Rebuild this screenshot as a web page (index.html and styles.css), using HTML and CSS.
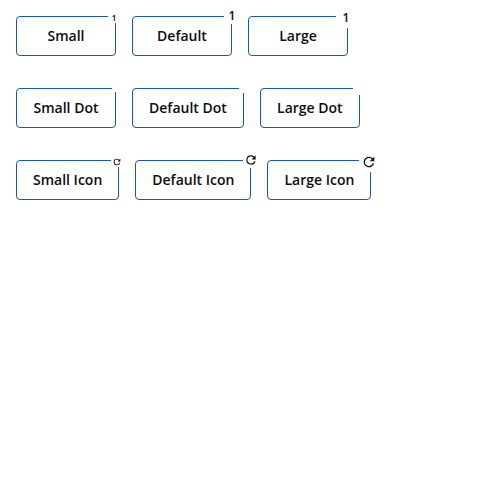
FILE: index.html
```html
<!DOCTYPE html>
<html lang="en">
<head>
<meta charset="utf-8">
<title>Badge sizes</title>
<link rel="stylesheet" href="styles.css">
</head>
<body>
<svg width="0" height="0" class="defs" aria-hidden="true"><symbol id="refresh" viewBox="0 0 24 24"><path d="M17.65 6.35A7.96 7.96 0 0 0 12 4a8 8 0 1 0 7.73 10h-2.08A6 6 0 1 1 12 6c1.66 0 3.14.69 4.22 1.78L13 11h7V4z"/></symbol></svg>
<main class="rows">
  <div class="row">
    <button class="button">Small<span class="badge small">1</span></button>
    <button class="button">Default<span class="badge default">1</span></button>
    <button class="button">Large<span class="badge large">1</span></button>
  </div>
  <div class="row">
    <button class="button">Small Dot<span class="badge dot-small"></span></button>
    <button class="button">Default Dot<span class="badge dot-default"></span></button>
    <button class="button">Large Dot<span class="badge dot-large"></span></button>
  </div>
  <div class="row">
    <button class="button">Small Icon<span class="badge small"><svg class="icon"><use href="#refresh"/></svg></span></button>
    <button class="button">Default Icon<span class="badge default"><svg class="icon"><use href="#refresh"/></svg></span></button>
    <button class="button">Large Icon<span class="badge large"><svg class="icon"><use href="#refresh"/></svg></span></button>
  </div>
</main>
</body>
</html>
```
FILE: styles.css
```css
* { box-sizing: border-box; }
body { margin: 0; background: #fff; color: #0d0d0d; font: 600 14px/20px "Open Sans", sans-serif; }
.defs { position: absolute; }
.rows { display: flex; flex-direction: column; gap: 32px; padding: 16px; }
.row { display: flex; gap: 16px; }
.button { position: relative; min-width: 100px; height: 40px; padding: 0 16px; border: 1px solid #1455c0; border-radius: 4px; background: #fff; color: inherit; font: inherit; white-space: nowrap; }
.badge { position: absolute; display: flex; align-items: center; justify-content: center; background: #fff; }
.small { top: -4px; right: -5px; width: 12px; height: 10px; font-size: 9px; }
.default { top: -9px; right: -9px; width: 16px; height: 16px; font-size: 12px; }
.large { top: -9px; right: -9px; width: 20px; height: 20px; font-size: 12px; }
.dot-small { top: -3px; right: -3px; width: 6px; height: 6px; }
.dot-default { top: -4px; right: -4px; width: 8px; height: 8px; }
.dot-large { top: -6px; right: -6px; width: 12px; height: 12px; }
.icon { flex: none; fill: currentColor; }
.small .icon { width: 10px; height: 10px; }
.default .icon { width: 14px; height: 14px; }
.large .icon { width: 16px; height: 16px; }
```
